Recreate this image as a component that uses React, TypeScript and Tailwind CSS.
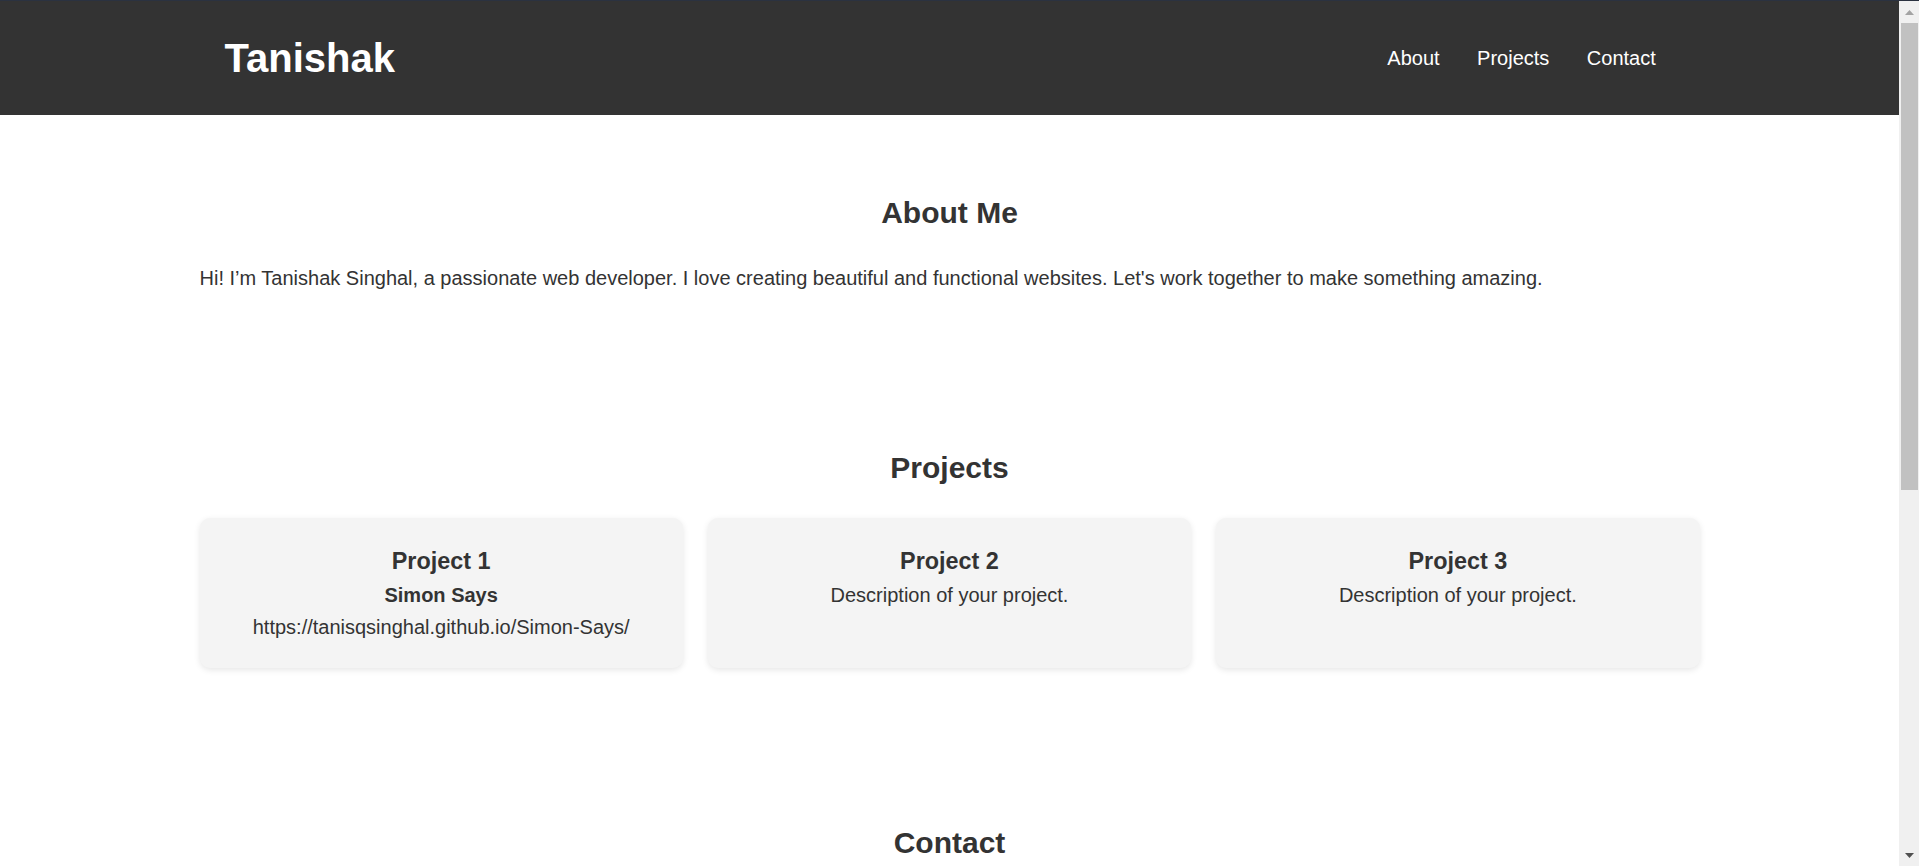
import React from "react";

type Project = {
  title: string;
  subtitle?: string;
  text: string;
};

const projects: Project[] = [
  {
    title: "Project 1",
    subtitle: "Simon Says",
    text: "https://tanisqsinghal.github.io/Simon-Says/",
  },
  { title: "Project 2", text: "Description of your project." },
  { title: "Project 3", text: "Description of your project." },
];

function ProjectCard({ project }: { project: Project }) {
  return (
    <div className="bg-[#f4f4f4] rounded-[10px] shadow-[0_2px_6px_rgba(0,0,0,0.1)] pt-[30px] pb-[29px] px-5 text-center">
      <h3 className="text-[23.4px] leading-[27px] font-bold mb-[9px]">
        {project.title}
      </h3>
      {project.subtitle && (
        <h4 className="text-[20px] leading-[23px] font-bold mb-[9px]">
          {project.subtitle}
        </h4>
      )}
      <p className="text-[20px] leading-[23px]">{project.text}</p>
    </div>
  );
}

function Scrollbar() {
  return (
    <div className="w-[20px] shrink-0 bg-[#f0f0f0] flex flex-col">
      {/* up arrow */}
      <div className="h-[22px] flex items-center justify-center">
        <svg width="9" height="5" viewBox="0 0 9 5">
          <polygon points="4.5,0 9,5 0,5" fill="#a3a3a3" />
        </svg>
      </div>
      {/* thumb */}
      <div className="h-[467px] ml-[2px] mr-[1px] bg-[#c1c1c1]" />
      <div className="flex-1" />
      {/* down arrow */}
      <div className="h-[17px] flex items-start justify-center pt-[4px]">
        <svg width="9" height="5" viewBox="0 0 9 5">
          <polygon points="0,0 9,0 4.5,5" fill="#505050" />
        </svg>
      </div>
    </div>
  );
}

export default function App() {
  return (
    <div className="h-[866px] overflow-hidden flex flex-col bg-white text-[#333] font-['Liberation_Sans',Arial,sans-serif]">
      <div className="h-px bg-[#2b3240] shrink-0" />
      <div className="flex flex-1 min-h-0">
        <div className="flex-1 min-w-0">
          {/* Header */}
          <header className="h-[114px] bg-[#333333]">
            <div className="w-[1500px] mx-auto h-full px-[25px] flex items-center justify-between">
              <h1 className="text-[40px] leading-[46px] font-bold text-white">
                Tanishak
              </h1>
              <nav>
                <ul className="flex text-[20px] leading-[23px] text-white">
                  <li className="mx-[18.75px]">About</li>
                  <li className="mx-[18.75px]">Projects</li>
                  <li className="mx-[18.75px]">Contact</li>
                </ul>
              </nav>
            </div>
          </header>

          <main className="w-[1500px] mx-auto">
            {/* About */}
            <section className="pt-[80px]">
              <h2 className="text-[30px] leading-[36px] font-bold text-center">
                About Me
              </h2>
              <p className="mt-[36px] text-[20px] leading-[23px]">
                Hi! I’m Tanishak Singhal, a passionate web developer. I love
                creating beautiful and functional websites. Let's work together
                to make something amazing.
              </p>
            </section>

            {/* Projects */}
            <section className="mt-[160px]">
              <h2 className="text-[30px] leading-[36px] font-bold text-center">
                Projects
              </h2>
              <div className="mt-[32px] grid grid-cols-3 gap-[25px]">
                {projects.map((p) => (
                  <ProjectCard key={p.title} project={p} />
                ))}
              </div>
            </section>

            {/* Contact */}
            <section className="mt-[157px]">
              <h2 className="text-[30px] leading-[36px] font-bold text-center">
                Contact
              </h2>
            </section>
          </main>
        </div>
        <Scrollbar />
      </div>
    </div>
  );
}
